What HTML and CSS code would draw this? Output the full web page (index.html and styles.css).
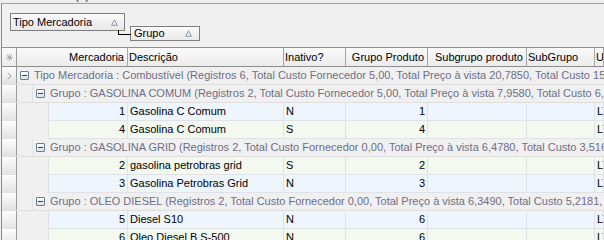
FILE: index.html
```html
<!DOCTYPE html>
<html lang="pt-BR">

<head>
    <meta charset="UTF-8">
    <meta name="viewport" content="width=device-width, initial-scale=1.0">
    <title>Resultados</title>
    <link rel="stylesheet" href="styles.css">
</head>

<body>
    <div class="caption"><span>Resultados (6)</span></div>

    <div class="panel">
        <!--Area de agrupamento-->
        <div class="group-by">
            <div class="chip chip-tipo">
                <span>Tipo Mercadoria</span>
                <svg class="sort" width="7" height="7" viewBox="0 0 7 7"><path d="M3.5 0.8 L6.4 6.3 L0.6 6.3 Z" /></svg>
            </div>
            <div class="chip chip-grupo">
                <span>Grupo</span>
                <svg class="sort" width="7" height="7" viewBox="0 0 7 7"><path d="M3.5 0.8 L6.4 6.3 L0.6 6.3 Z" /></svg>
            </div>
        </div>

        <!--Grade-->
        <div class="grid">
            <div class="row head">
                <div class="ind">
                    <svg width="7" height="7" viewBox="0 0 7 7"><path d="M3.5 0 V7 M0 3.5 H7 M1 1 L6 6 M6 1 L1 6" /></svg>
                </div>
                <div class="cell right">Mercadoria</div>
                <div class="cell">Descrição</div>
                <div class="cell">Inativo?</div>
                <div class="cell right">Grupo Produto</div>
                <div class="cell right">Subgrupo produto</div>
                <div class="cell">SubGrupo</div>
                <div class="cell">U</div>
            </div>

            <div class="row group lvl1">
                <div class="ind">
                    <svg width="5" height="8" viewBox="0 0 5 8"><path d="M0.8 0.8 L4 4 L0.8 7.2" /></svg>
                </div>
                <div class="group-text"><i class="toggle"></i>Tipo Mercadoria : Combustível (Registros 6, Total Custo Fornecedor 5,00, Total Preço à vista 20,7850, Total Custo 15,2049, Total Preço a prazo 20,7850)</div>
            </div>

            <div class="row group lvl2">
                <div class="ind"></div>
                <div class="indent"></div>
                <div class="group-text"><i class="toggle"></i>Grupo : GASOLINA COMUM (Registros 2, Total Custo Fornecedor 5,00, Total Preço à vista 7,9580, Total Custo 6,8120)</div>
            </div>
            <div class="row data even">
                <div class="ind"></div>
                <div class="indent"></div>
                <div class="cell right">1</div>
                <div class="cell">Gasolina C Comum</div>
                <div class="cell">N</div>
                <div class="cell right">1</div>
                <div class="cell"></div>
                <div class="cell"></div>
                <div class="cell">LT</div>
            </div>
            <div class="row data odd">
                <div class="ind"></div>
                <div class="indent"></div>
                <div class="cell right">4</div>
                <div class="cell">Gasolina C Comum</div>
                <div class="cell">S</div>
                <div class="cell right">4</div>
                <div class="cell"></div>
                <div class="cell"></div>
                <div class="cell">LT</div>
            </div>

            <div class="row group lvl2">
                <div class="ind"></div>
                <div class="indent"></div>
                <div class="group-text"><i class="toggle"></i>Grupo : GASOLINA GRID (Registros 2, Total Custo Fornecedor 0,00, Total Preço à vista 6,4780, Total Custo 3,5169)</div>
            </div>
            <div class="row data odd">
                <div class="ind"></div>
                <div class="indent"></div>
                <div class="cell right">2</div>
                <div class="cell">gasolina petrobras grid</div>
                <div class="cell">S</div>
                <div class="cell right">2</div>
                <div class="cell"></div>
                <div class="cell"></div>
                <div class="cell">LT</div>
            </div>
            <div class="row data even">
                <div class="ind"></div>
                <div class="indent"></div>
                <div class="cell right">3</div>
                <div class="cell">Gasolina Petrobras Grid</div>
                <div class="cell">N</div>
                <div class="cell right">3</div>
                <div class="cell"></div>
                <div class="cell"></div>
                <div class="cell">LT</div>
            </div>

            <div class="row group lvl2">
                <div class="ind"></div>
                <div class="indent"></div>
                <div class="group-text"><i class="toggle"></i>Grupo : OLEO DIESEL (Registros 2, Total Custo Fornecedor 0,00, Total Preço à vista 6,3490, Total Custo 5,2181, Total Preço a prazo 6,3490)</div>
            </div>
            <div class="row data even">
                <div class="ind"></div>
                <div class="indent"></div>
                <div class="cell right">5</div>
                <div class="cell">Diesel S10</div>
                <div class="cell">N</div>
                <div class="cell right">6</div>
                <div class="cell"></div>
                <div class="cell"></div>
                <div class="cell">LT</div>
            </div>
            <div class="row data odd">
                <div class="ind"></div>
                <div class="indent"></div>
                <div class="cell right">6</div>
                <div class="cell">Oleo Diesel B S-500</div>
                <div class="cell">N</div>
                <div class="cell right">6</div>
                <div class="cell"></div>
                <div class="cell"></div>
                <div class="cell">LT</div>
            </div>
        </div>
    </div>
</body>

</html>
```

FILE: styles.css
```css
html, body {
    margin: 0;
    height: 100%;
}

body {
    font-family: 'Liberation Sans', Arial, sans-serif;
    font-size: 11px;
    color: #000;
    background-color: #f0f0f0;
    width: 604px;
    height: 240px;
    overflow: hidden;
    padding-left: 1px;
    box-sizing: border-box;
}

/*Titulo cortado no topo*/
.caption {
    height: 3px;
    overflow: hidden;
    padding-left: 12px;

    span {
        display: block;
        margin-top: -10px;
        line-height: 12px;
        font-weight: bold;
        color: #707070;
    }
}

.panel {
    border-top: 1px solid #a0a0a0;
    border-left: 1px solid #8a8a8a;
    background-color: #f0f0f0;
}

/*Area de agrupamento*/
.group-by {
    height: 43px;
    display: flex;
    align-items: flex-start;
    padding-left: 8px;
}

.chip {
    display: flex;
    align-items: center;
    justify-content: space-between;
    box-sizing: border-box;
    border: 1px solid #7d7d7d;
    background: linear-gradient(#fafafa, #e9e9e9);
    padding: 0 6px 0 2px;
    line-height: 13px;

    .sort {
        fill: none;
        stroke: #8796b4;
        stroke-width: 1;
    }
}

.chip-tipo {
    width: 115px;
    height: 18px;
    margin-top: 9px;
}

.chip-grupo {
    position: relative;
    width: 70px;
    height: 15px;
    margin-top: 22px;
    margin-left: 5px;
    padding-left: 3px;
    padding-right: 7px;

    &::before {
        content: '';
        position: absolute;
        left: -13px;
        top: 3px;
        width: 12px;
        height: 4px;
        border-left: 1px solid #000;
        border-bottom: 1px solid #000;
    }
}

/*Grade*/
.grid {
    background-color: #f0f0f0;
}

.row {
    display: grid;
    height: 18px;
    box-sizing: border-box;
    overflow: hidden;
    white-space: nowrap;
}

.ind {
    box-sizing: border-box;
    border-right: 1px solid #9c9c9c;
    border-bottom: 1px solid #b4b4b4;
    background: linear-gradient(#fdfdfd, #e2e2e2);
    display: flex;
    align-items: center;
    justify-content: center;

    svg {
        fill: none;
        stroke: #9a9a9a;
        stroke-width: 1;
    }
}

.cell {
    box-sizing: border-box;
    padding: 0 2px;
    line-height: 17px;
    overflow: hidden;

    &.right {
        text-align: right;
    }
}

.head {
    height: 20px;
    border-top: 1px solid #8e8e8e;
    border-bottom: 1px solid #8e8e8e;
    grid-template-columns: 15px 111px 156px 62px 82px 99px 68px 1fr;
    background: linear-gradient(#fafafa, #ececec);

    .ind {
        border-bottom: none;
        background: none;

        svg {
            stroke: #b0b0b0;
        }
    }

    .cell {
        border-right: 1px solid #a6a6a6;
        line-height: 18px;
        padding: 0 3px 0 1px;
    }

    .cell.right {
        padding: 0 3px 0 1px;
    }
}

.group {
    border-bottom: 1px solid #dedede;
    color: #6e6e86;

    .ind {
        margin-bottom: -1px;
    }

    &.lvl1 {
        grid-template-columns: 15px 1fr;
    }

    &.lvl2 {
        grid-template-columns: 15px 16px 1fr;
    }
}

.group-text {
    display: flex;
    align-items: center;
    padding-left: 3px;
    line-height: 17px;
}

.toggle {
    width: 9px;
    height: 9px;
    box-sizing: border-box;
    margin-right: 5px;
    border: 1px solid #6b7c98;
    border-radius: 1px;
    background: linear-gradient(#ffffff, #dde2ea);
    position: relative;
    flex: none;

    &::after {
        content: '';
        position: absolute;
        left: 1px;
        top: 3px;
        width: 5px;
        height: 1px;
        background-color: #2c3a52;
    }
}

.indent {
    border-right: 1px solid #e2e2e2;
}

.data {
    grid-template-columns: 15px 32px 79px 156px 62px 82px 99px 68px 1fr;

    .ind {
        margin-bottom: -1px;
    }

    .indent {
        margin-bottom: -1px;
    }

    .cell {
        border-right: 1px solid #dfe2e6;
        border-bottom: 1px solid #dfe2e6;
        line-height: 17px;
    }

    &.even .cell {
        background-color: #eff5fd;
    }

    &.odd .cell {
        background-color: #f3f9ef;
    }
}
```
